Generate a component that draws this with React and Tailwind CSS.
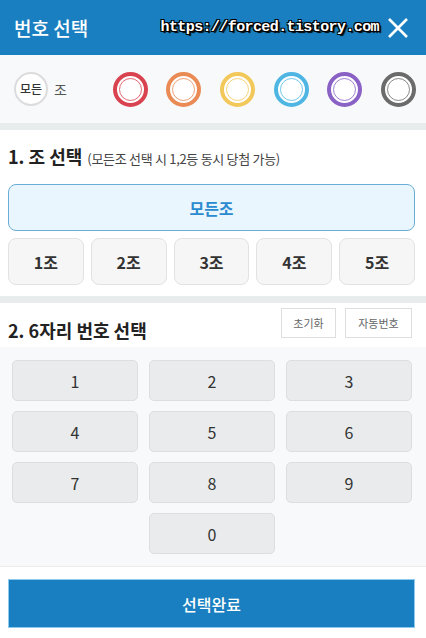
import React from 'react';

const KR = { fontFamily: '"Noto Sans CJK KR", "Noto Sans", sans-serif' };

const RINGS = [
  'border-[#d9434f]',
  'border-[#ea8a55]',
  'border-[#f2c85a]',
  'border-[#4fb6e3]',
  'border-[#8a62c6]',
  'border-[#6b6b6b]',
];

function Ring({ color }) {
  return (
    <div className={`w-[35px] h-[35px] rounded-full border-[4px] ${color} bg-white flex items-center justify-center`}>
      <div className={`w-[23px] h-[23px] rounded-full border ${color} opacity-80`} />
    </div>
  );
}

export default function App() {
  const keys = ['1', '2', '3', '4', '5', '6', '7', '8', '9'];
  return (
    <div className="w-[426px] h-[638px] bg-white flex flex-col overflow-hidden" style={KR}>
      {/* Header */}
      <div className="h-[55px] bg-[#1a7fc0] flex items-center pl-[14px] pr-[17px] shrink-0">
        <span className="text-white text-[19px] font-medium leading-none">번호 선택</span>
        <span
          className="ml-auto mr-[8px] text-white text-[15px] font-bold leading-none tracking-[-0.6px]"
          style={{
            fontFamily: '"Liberation Mono", monospace',
            textShadow:
              '1px 1px 0 #000, -1px -1px 0 #000, 1px -1px 0 #000, -1px 1px 0 #000, 0 1px 0 #000, 1px 0 0 #000, 2px 2px 1px #000',
          }}
        >
          https://forced.tistory.com
        </span>
        <svg width="22" height="22" viewBox="0 0 22 22" className="shrink-0">
          <path d="M2 2 L20 20 M20 2 L2 20" stroke="white" strokeWidth="2.6" />
        </svg>
      </div>

      {/* Ring row */}
      <div className="h-[68px] bg-[#f8f9fb] flex items-center pl-[14px] shrink-0">
        <div className="w-[34px] h-[34px] rounded-full border-[2px] border-[#dcdcdc] bg-white flex items-center justify-center">
          <span className="text-[12px] font-medium text-[#333] leading-none">모든</span>
        </div>
        <span className="ml-[6px] text-[14px] text-[#555]">조</span>
        <div className="ml-[46px] flex gap-[18.6px]">
          {RINGS.map((c) => (
            <Ring key={c} color={c} />
          ))}
        </div>
      </div>
      <div className="h-[7px] bg-[#e9ecec] shrink-0" />

      {/* Section 1 */}
      <div className="pl-[8px] pr-[11px] pt-[13px] pb-[11px] shrink-0">
        <div className="flex items-baseline h-[26px]">
          <span className="text-[18px] font-bold text-[#222] leading-[26px]">1. 조 선택</span>
          <span className="ml-[5px] text-[13px] text-[#444] tracking-[-0.3px]">(모든조 선택 시 1,2등 동시 당첨 가능)</span>
        </div>
        <div className="mt-[15px] h-[47px] rounded-[8px] border border-[#6aaed8] bg-[#eaf6fd] flex items-center justify-center">
          <span className="text-[16px] font-bold text-[#2b8ad0]">모든조</span>
        </div>
        <div className="mt-[7px] grid grid-cols-5 gap-[7px]">
          {['1조', '2조', '3조', '4조', '5조'].map((t) => (
            <div
              key={t}
              className="h-[47px] rounded-[8px] border border-[#e2e2e2] bg-[#f6f6f6] flex items-center justify-center"
            >
              <span className="text-[16px] font-bold text-[#333]">{t}</span>
            </div>
          ))}
        </div>
      </div>
      <div className="h-[7px] bg-[#e9ecec] shrink-0" />

      {/* Section 2 */}
      <div className="h-[44px] flex items-start pl-[8px] pr-[14px] pt-[5px] shrink-0">
        <span className="mt-[9px] text-[18px] font-bold text-[#222] leading-[26px]">2. 6자리 번호 선택</span>
        <div className="ml-auto flex gap-[9px]">
          <div className="w-[55px] h-[30px] border border-[#dedede] bg-white flex items-center justify-center text-[11px] text-[#666]">
            초기화
          </div>
          <div className="w-[67px] h-[30px] border border-[#dedede] bg-white flex items-center justify-center text-[11px] text-[#666]">
            자동번호
          </div>
        </div>
      </div>

      <div className="bg-[#f8f9fb] pl-[12px] pt-[13px] pb-[12px] border-b border-[#ececec] shrink-0">
        <div className="grid grid-cols-[126px_126px_126px] gap-x-[11px] gap-y-[10px]">
          {keys.map((k) => (
            <div
              key={k}
              className="h-[41px] rounded-[5px] border border-[#dcdedf] bg-[#e9ebec] flex items-center justify-center text-[16px] text-[#333]"
            >
              {k}
            </div>
          ))}
          <div />
          <div className="h-[41px] rounded-[5px] border border-[#dcdedf] bg-[#e9ebec] flex items-center justify-center text-[16px] text-[#333]">
            0
          </div>
        </div>
      </div>

      <div className="pl-[8px] pr-[11px] pt-[12px]">
        <div className="h-[49px] bg-[#1a7fc0] border border-[#8ccbee] flex items-center justify-center">
          <span className="text-white text-[16px] font-medium">선택완료</span>
        </div>
      </div>
    </div>
  );
}
